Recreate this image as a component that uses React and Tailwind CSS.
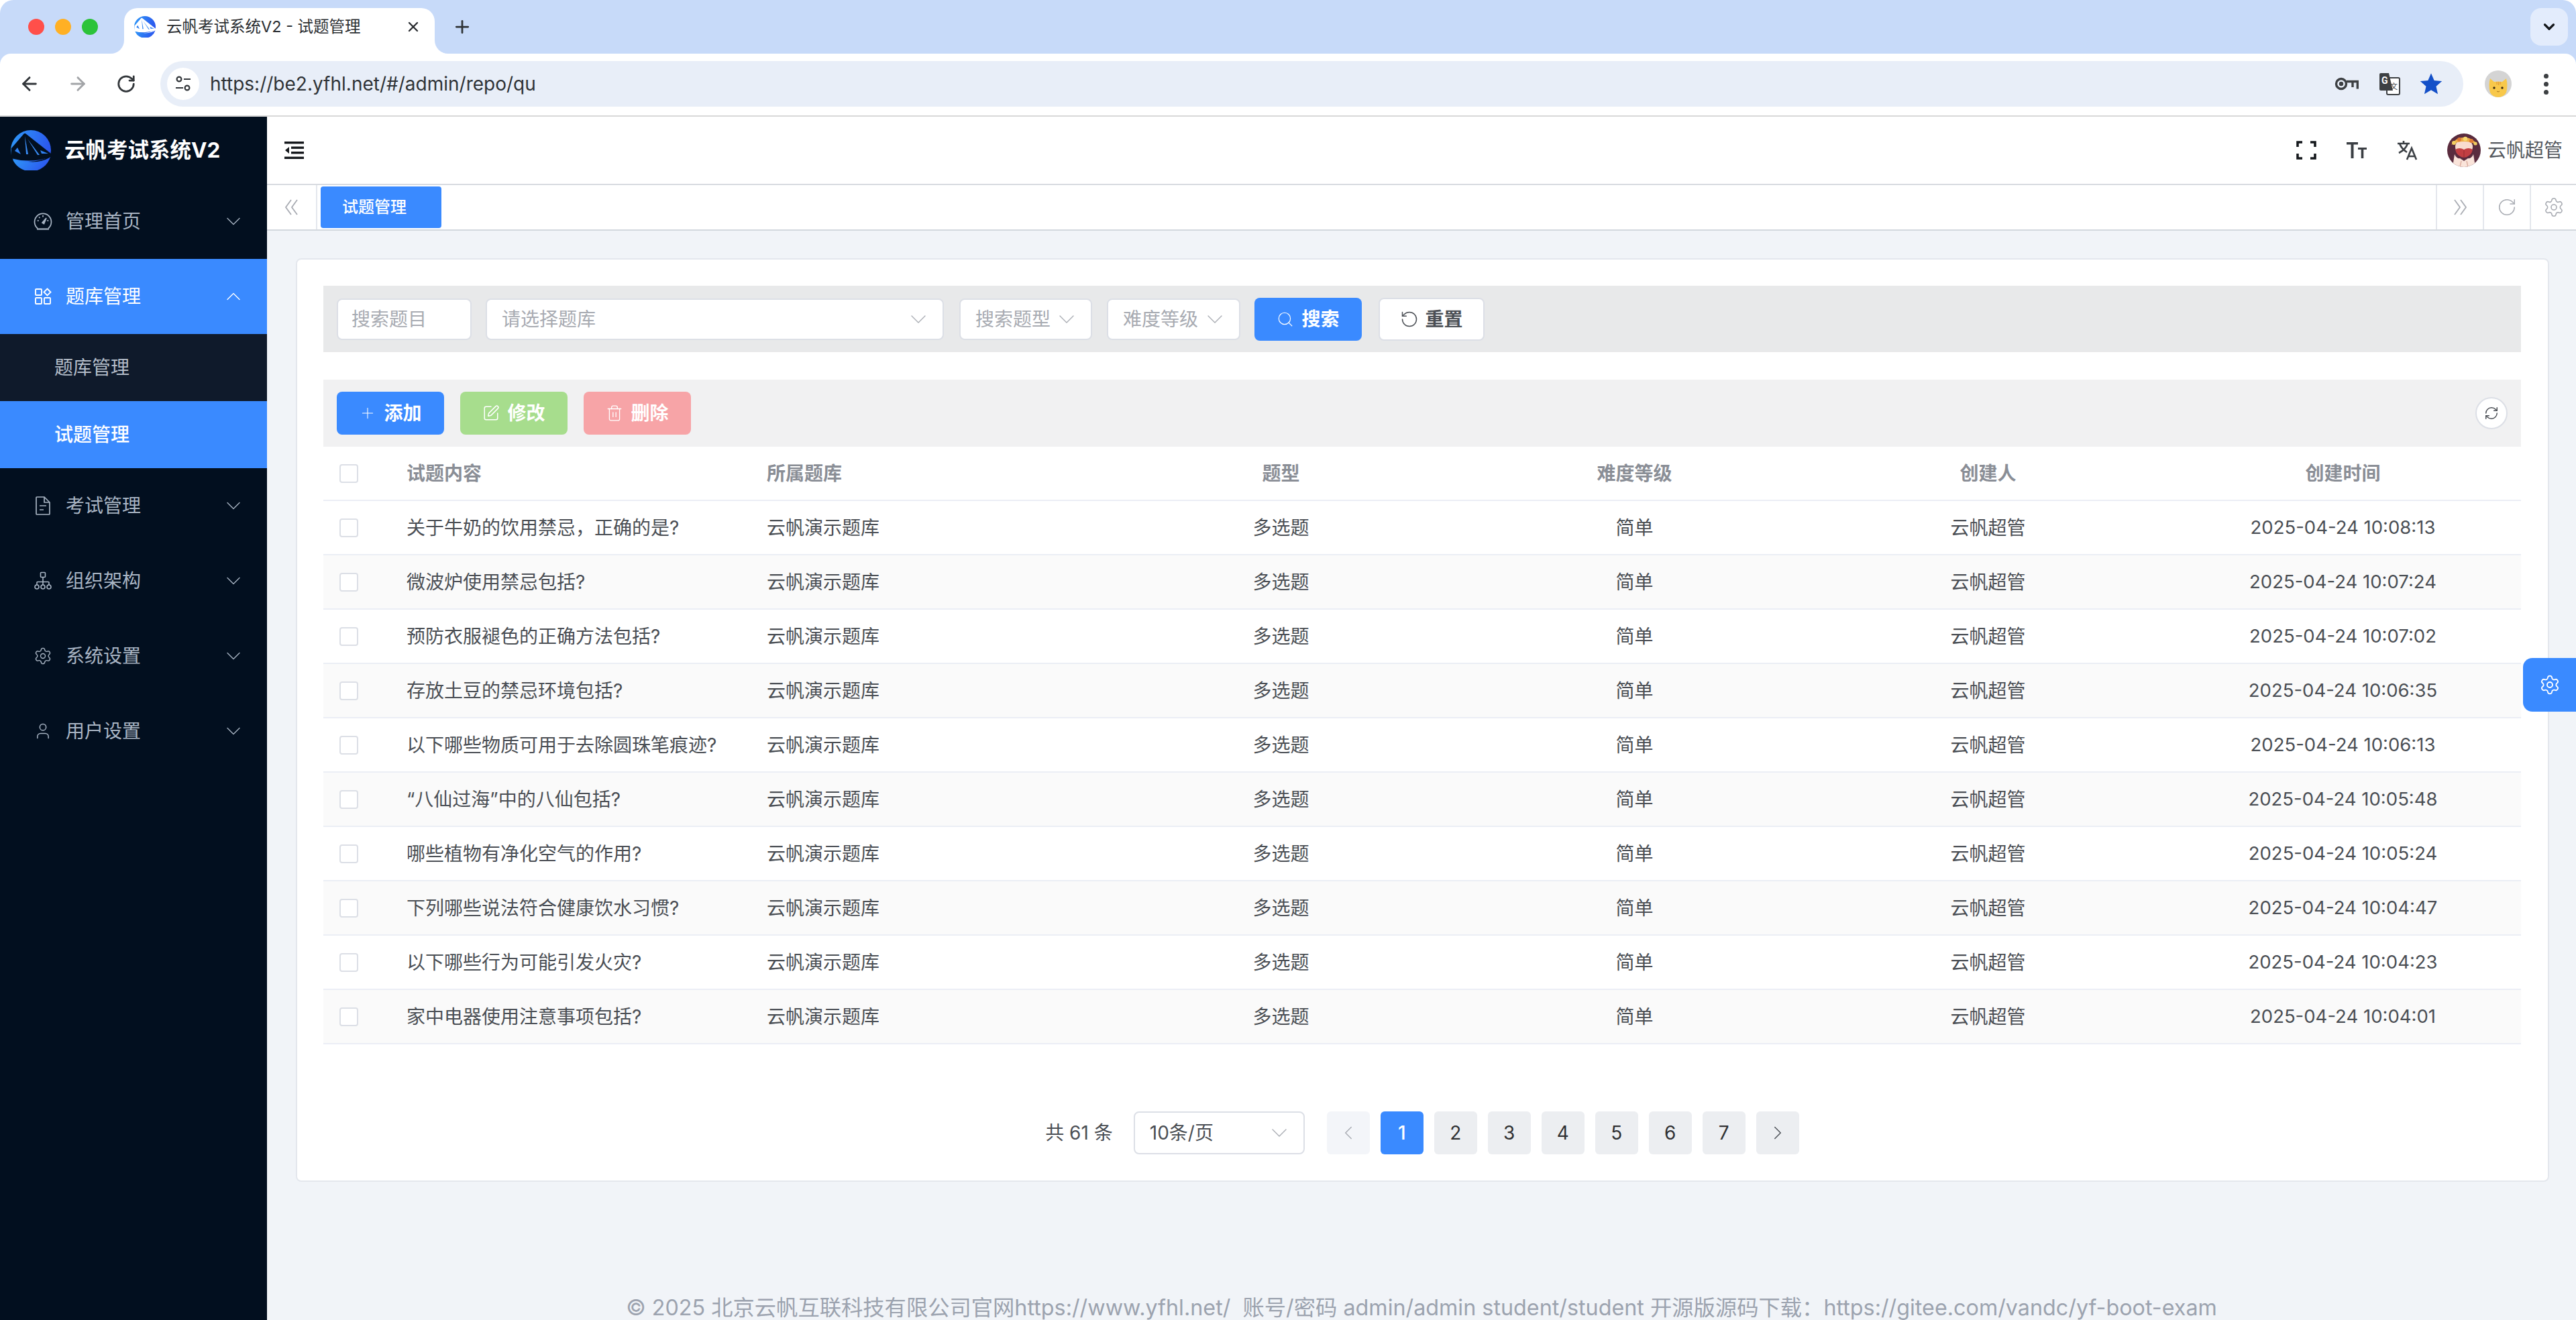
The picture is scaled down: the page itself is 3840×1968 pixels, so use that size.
import {
  ArrowLeft, ArrowRight, RotateCw, Plus, X, ChevronDown, ChevronUp, ChevronLeft, ChevronRight,
  Settings, User, SquarePen, Trash2, Search, RotateCcw, RefreshCw,
} from 'lucide-react';

const rows = [
  ['关于牛奶的饮用禁忌，正确的是?', '2025-04-24 10:08:13'],
  ['微波炉使用禁忌包括?', '2025-04-24 10:07:24'],
  ['预防衣服褪色的正确方法包括?', '2025-04-24 10:07:02'],
  ['存放土豆的禁忌环境包括?', '2025-04-24 10:06:35'],
  ['以下哪些物质可用于去除圆珠笔痕迹?', '2025-04-24 10:06:13'],
  ['“八仙过海”中的八仙包括?', '2025-04-24 10:05:48'],
  ['哪些植物有净化空气的作用?', '2025-04-24 10:05:24'],
  ['下列哪些说法符合健康饮水习惯?', '2025-04-24 10:04:47'],
  ['以下哪些行为可能引发火灾?', '2025-04-24 10:04:23'],
  ['家中电器使用注意事项包括?', '2025-04-24 10:04:01'],
];

const LogoMark = ({ className, cut = '#020f1f' }) => (
  <svg viewBox="0 0 60 60" className={className}>
    <defs>
      <linearGradient id="logoGrad" x1="0" y1="0" x2="1" y2="0.3">
        <stop offset="0" stopColor="#2f9bf8" />
        <stop offset="1" stopColor="#2b57ee" />
      </linearGradient>
    </defs>
    <circle cx="30" cy="30" r="30" fill="url(#logoGrad)" />
    <path d="M20 5 L1 27 L0 42 Q30 50 60 40 L60 35 L22 5Z" fill={cut} />
    <path d="M21 9 L23 36 L26 36 Z" fill="#3a8df5" />
    <path d="M25 13 L40 37 L43 37 Z" fill="#3a8df5" />
    <path d="M10 26 L15 36 L6 31 Z M44 30 L56 35 L46 35 Z" fill="#2f80f2" />
    <path d="M3 44 Q30 52 59 40 A30 30 0 0 1 3 44Z" fill="url(#logoGrad)" />
    <path d="M26 47 Q44 47 58 39 L58 41 Q44 49 26 47Z" fill={cut} />
  </svg>
);

const CatAvatar = () => (
  <svg viewBox="0 0 40 40" className="w-10 h-10">
    <circle cx="20" cy="20" r="20" fill="#d4d4d4" />
    <path d="M8 33 Q5 22 8 12 L14 17 Q20 16 26 17 L32 12 Q35 22 32 33 Q28 40 20 40 Q12 40 8 33Z" fill="#f8c84a" />
    <path d="M18 17v4M20.500 17v5M23 17v4" stroke="#e39a3a" strokeWidth="1.200" />
    <circle cx="14" cy="26" r="1.700" fill="#3a2a10" />
    <circle cx="26" cy="26" r="1.700" fill="#3a2a10" />
    <path d="M18 31 Q20 33 22 31" stroke="#a8741c" strokeWidth="1" fill="none" />
  </svg>
);

const UserAvatar = () => (
  <svg viewBox="0 0 50 50" className="w-[50px] h-[50px] shrink-0">
    <clipPath id="avatarClip"><circle cx="25" cy="25" r="25" /></clipPath>
    <g clipPath="url(#avatarClip)">
      <rect width="50" height="50" fill="#5a2c3e" />
      <ellipse cx="25" cy="20" rx="13" ry="12" fill="#f8dcd0" />
      <path d="M6 17 Q14 5 25 6 Q37 5 45 17 Q35 12 25 12 Q15 12 6 17Z" fill="#eeb04a" />
      <circle cx="10" cy="14" r="3" fill="#f3cf62" />
      <circle cx="18" cy="9" r="3" fill="#e07a36" />
      <circle cx="27" cy="8" r="3.200" fill="#f6d86e" />
      <circle cx="36" cy="11" r="3" fill="#e07a36" />
      <circle cx="42" cy="15" r="2.600" fill="#f3cf62" />
      <path d="M12 24 Q18 20 25 24 Q32 20 38 24 Q36 34 25 36 Q14 34 12 24Z" fill="#c23e42" />
      <path d="M25 25v11" stroke="#962a2e" strokeWidth="1" />
      <path d="M8 50 L11 31 Q14 38 19 37 L25 41 L31 37 Q36 38 39 31 L42 50Z" fill="#fae4da" />
      <path d="M19 50 L21 41 M31 50 L29 41" stroke="#dcae9f" strokeWidth="1.500" />
    </g>
  </svg>
);

const GaugeIcon = () => (
  <svg viewBox="0 0 28 28" className="w-[28px] h-[28px]" fill="none" stroke="currentColor" strokeWidth="1.700">
    <path d="M6 24.500 A12.500 12.500 0 1 1 22 24.500" />
    <path d="M5 25.500h18" strokeWidth="2.200" />
    <path d="M14 5v2.500M5.500 13H8M20 13h2.500M8 7.500l1.500 1.500" />
    <path d="M13 16 L19 9 L15.500 17.500 Z" fill="currentColor" />
  </svg>
);

const DocIcon = () => (
  <svg viewBox="0 0 26 30" className="w-[26px] h-[30px]" fill="none" stroke="currentColor" strokeWidth="1.700">
    <path d="M3 3a1 1 0 0 1 1-1h11l8 8v17a1 1 0 0 1-1 1H4a1 1 0 0 1-1-1z" />
    <path d="M15 2v8h8M8 15h10M8 21h6" />
  </svg>
);

const OrgIcon = () => (
  <svg viewBox="0 0 28 28" className="w-7 h-7" fill="none" stroke="currentColor" strokeWidth="1.600">
    <rect x="10.500" y="1.500" width="7" height="7" rx="1" />
    <path d="M14 8.500V14M5 20v-3.500a1 1 0 0 1 1-1h16a1 1 0 0 1 1 1V20M14 14v6" />
    <circle cx="5" cy="23" r="3" />
    <circle cx="14" cy="23" r="3" />
    <circle cx="23" cy="23" r="3" />
  </svg>
);

const GridIcon = () => (
  <svg viewBox="0 0 26 26" className="w-[26px] h-[26px]" fill="none" stroke="currentColor" strokeWidth="1.900">
    <rect x="2" y="2" width="9" height="9" rx="1" />
    <rect x="2" y="15" width="9" height="9" rx="1" />
    <rect x="15" y="15" width="9" height="9" rx="1" />
    <path d="M19.500 1.500 L24.500 6.500 L19.500 11.500 L14.500 6.500Z" />
  </svg>
);

const MenuItem = ({ icon, label, open = false }) => (
  <div className={`h-[112px] flex items-center pl-[50px] pr-[32px] ${open ? 'bg-[#3a8aff] text-white' : 'text-[#a9b5c4]'}`}>
    <span className="w-[28px] flex justify-center">{icon}</span>
    <span className="ml-[20px] text-[28px] flex-1">{label}</span>
    {open ? <ChevronUp size={36} strokeWidth={0.900} /> : <ChevronDown size={36} strokeWidth={0.900} />}
  </div>
);

const SelectBox = ({ label, width, textClass = 'text-[#a8abb2]' }) => (
  <div className={`${width} bg-white border-2 border-[#dcdfe6] rounded-[8px] flex items-center justify-between pl-[22px] pr-[16px] text-[28px] ${textClass}`}>
    <span>{label}</span>
    <ChevronDown size={40} strokeWidth={0.800} className="text-[#a8abb2]" />
  </div>
);

const ActionButton = ({ icon, label, color }) => (
  <div className={`w-[160px] h-[64px] rounded-[8px] flex items-center justify-center gap-[11px] text-white text-[28px] font-bold ${color}`}>
    <span className="w-[26px] flex justify-center">{icon}</span>
    <span>{label}</span>
  </div>
);

const DoubleChevron = ({ d }) => (
  <svg viewBox="0 0 21 24" className="w-[21px] h-[24px]" fill="none" stroke="#a8abb2" strokeWidth="1.800">
    <path d={d} />
  </svg>
);

const gridCols = 'grid grid-cols-[101px_536px_527px_527px_527px_527px_531px] items-center';

export default function App() {
  return (
    <div className="w-[3840px] h-[1968px] flex flex-col overflow-hidden relative bg-white font-[Inter,'Noto_Sans_CJK_SC',sans-serif]">
      {/* browser tab strip */}
      <div className="h-[80px] shrink-0 bg-[#c7daf9] rounded-t-[20px] flex items-end pl-[42px] pr-[12px]">
        <div className="h-[80px] flex items-center gap-[16px]">
          <span className="w-6 h-6 rounded-full bg-[#ff4f4a]" />
          <span className="w-6 h-6 rounded-full bg-[#ffb024]" />
          <span className="w-6 h-6 rounded-full bg-[#2cc33a]" />
        </div>
        <div className="ml-[39px] w-[463px] h-[68px] bg-white rounded-t-[20px] flex items-center pl-[15px] pr-[20px] pb-[12px] relative">
          <span className="absolute -left-[20px] bottom-0 w-5 h-5 bg-white"><span className="block w-full h-full bg-[#c7daf9] rounded-br-[20px]" /></span>
          <span className="absolute -right-[20px] bottom-0 w-5 h-5 bg-white"><span className="block w-full h-full bg-[#c7daf9] rounded-bl-[20px]" /></span>
          <LogoMark className="w-[32px] h-[32px]" cut="#ffffff" />
          <span className="ml-[16px] text-[23.5px] text-[#2c2f33] flex-1 whitespace-nowrap">云帆考试系统V2 - 试题管理</span>
          <X size={24} strokeWidth={2.400} className="text-[#2c2f33]" />
        </div>
        <div className="h-[80px] ml-[26px] flex items-center">
          <Plus size={30} strokeWidth={2.200} className="text-[#2f3337]" />
        </div>
        <div className="ml-auto mb-[12px] w-[56px] h-[56px] rounded-[16px] bg-[#e3ecfc] flex items-center justify-center">
          <ChevronDown size={26} strokeWidth={3} className="text-[#15181c]" />
        </div>
      </div>

      {/* browser toolbar */}
      <div className="shrink-0 bg-[#c7daf9]">
        <div className="h-[94px] bg-white rounded-t-[16px] border-b-2 border-[#d8d8d8] flex items-center pl-[28px] pr-[40px] pb-[2px]">
          <ArrowLeft size={32} strokeWidth={2.200} className="text-[#33373b]" />
          <ArrowRight size={32} strokeWidth={2.200} className="ml-[40px] text-[#a3a5a8]" />
          <RotateCw size={30} strokeWidth={2.200} className="ml-[41px] text-[#33373b]" />
          <div className="ml-[36px] flex-1 h-[68px] bg-[#e8eef8] rounded-full flex items-center pl-[10px] pr-[30px]">
            <div className="w-[48px] h-[48px] rounded-full bg-white flex items-center justify-center">
              <svg viewBox="0 0 28 28" className="w-[28px] h-[28px]" fill="none" stroke="#33373b" strokeWidth="2.200">
                <circle cx="8" cy="7" r="3.400" />
                <path d="M15 7h10M3 20h11" />
                <circle cx="20" cy="20" r="3.400" />
              </svg>
            </div>
            <span className="ml-[16px] text-[28px] text-[#2f3337] flex-1">https://be2.yfhl.net/#/admin/repo/qu</span>
            <svg viewBox="0 0 36 20" className="w-[36px] h-[20px]" fill="none" stroke="#3d4043" strokeWidth="3.400">
              <circle cx="10" cy="10" r="7.500" />
              <path d="M18 6.500h16.300v11M27 7v8" />
              <circle cx="10" cy="10" r="1.500" fill="#3d4043" />
            </svg>
            <svg viewBox="0 0 32 34" className="ml-[30px] w-[32px] h-[34px]">
              <rect x="12" y="8" width="19" height="25" rx="2" fill="#fff" stroke="#3d4043" strokeWidth="2" />
              <path d="M3 1h12l6 26H3a2 2 0 0 1-2-2V3a2 2 0 0 1 2-2z" fill="#3d4043" />
              <text x="4" y="17" fontSize="14" fontWeight="700" fill="#fff" fontFamily="Roboto, sans-serif">G</text>
              <text x="17" y="25" fontSize="11" fill="#3d4043" fontFamily="'Noto Sans CJK SC', sans-serif">文</text>
            </svg>
            <svg viewBox="0 0 24 24" className="ml-[28px] w-[36px] h-[36px]" fill="#1450c8">
              <path d="M12 1.500l3.100 7.200 7.700.7-5.800 5.100 1.700 7.600L12 18.100l-6.700 4 1.700-7.600L1.200 9.400l7.700-.7z" />
            </svg>
          </div>
          <div className="ml-[32px]"><CatAvatar /></div>
          <div className="ml-[48px] w-[8px] flex flex-col gap-[5px]">
            <span className="w-[7px] h-[7px] rounded-full bg-[#3d4043]" />
            <span className="w-[7px] h-[7px] rounded-full bg-[#3d4043]" />
            <span className="w-[7px] h-[7px] rounded-full bg-[#3d4043]" />
          </div>
        </div>
      </div>

      <div className="flex-1 flex min-h-0">
        {/* sidebar */}
        <aside className="w-[398px] shrink-0 bg-[#020f1f] flex flex-col">
          <div className="h-[100px] flex items-center pl-[16px]">
            <LogoMark className="w-[60px] h-[60px]" />
            <span className="ml-[20px] text-[31.5px] font-bold text-white whitespace-nowrap">云帆考试系统V2</span>
          </div>
          <MenuItem icon={<GaugeIcon />} label="管理首页" />
          <MenuItem icon={<GridIcon />} label="题库管理" open />
          <div className="h-[100px] bg-[#0f1a2b] flex items-center pl-[81px] text-[28px] text-[#b4bdc9]">题库管理</div>
          <div className="h-[100px] bg-[#3a8aff] flex items-center pl-[81px] text-[28px] font-medium text-white">试题管理</div>
          <MenuItem icon={<DocIcon />} label="考试管理" />
          <MenuItem icon={<OrgIcon />} label="组织架构" />
          <MenuItem icon={<Settings size={34} strokeWidth={1.200} />} label="系统设置" />
          <MenuItem icon={<User size={34} strokeWidth={1.300} />} label="用户设置" />
        </aside>

        <main className="flex-1 min-w-0 bg-[#f1f4f8] flex flex-col">
          {/* top header */}
          <div className="h-[102px] shrink-0 bg-white border-b-2 border-[#d8dbe0] flex items-center pl-[26px] pr-[20px] text-[#202327]">
            <svg viewBox="0 0 30 26" className="w-[30px] h-[26px]" fill="#15181c">
              <rect x="0" y="0" width="29" height="3.400" />
              <rect x="10" y="7.500" width="19" height="3.400" />
              <rect x="10" y="15" width="19" height="3.400" />
              <rect x="0" y="22.600" width="29" height="3.400" />
              <path d="M7 8v10l-6-5z" />
            </svg>
            <svg viewBox="0 0 30 28" className="ml-auto w-[30px] h-[28px]" fill="none" stroke="#15181c" strokeWidth="3.600">
              <path d="M2 9V2h7M21 2h7v7M28 19v7h-7M9 26H2v-7" />
            </svg>
            <svg viewBox="0 0 30 24" className="ml-[45px] w-[30px] h-[24px]" fill="#3b3f44">
              <path d="M0 0h17v3.600h-6.500V24H6.500V3.600H0zM17 8h13v3h-4.700V24H21.700V11H17z" />
            </svg>
            <svg viewBox="0 0 32 30" className="ml-[45px] w-[32px] h-[30px]" fill="none" stroke="#3b3f44" strokeWidth="2.600">
              <path d="M1 5h18M10 1v4M4 5q3 8 11 13M16 5q-3 9-13 14M15 29l7-17 7 17M18 24h8" />
            </svg>
            <span className="ml-[43px]"><UserAvatar /></span>
            <span className="ml-[10px] text-[28px] text-[#55595f]">云帆超管</span>
          </div>

          {/* tabs row */}
          <div className="h-[68px] shrink-0 bg-white border-b-2 border-[#d3d8de] flex items-center">
            <div className="w-[75px] h-full border-r-2 border-[#e4e7ed] flex items-center justify-center">
              <DoubleChevron d="M10 1 L2 12 L10 23 M19 1 L11 12 L19 23" />
            </div>
            <div className="ml-[5px] w-[180px] h-[62px] bg-[#3a8aff] rounded-[4px] flex items-center pl-[32px] text-[24px] font-medium text-white">试题管理</div>
            <div className="ml-auto w-[70px] h-full border-l-2 border-[#e4e7ed] flex items-center justify-center">
              <DoubleChevron d="M2 1 L10 12 L2 23 M11 1 L19 12 L11 23" />
            </div>
            <div className="w-[70px] h-full border-l-2 border-[#e4e7ed] flex items-center justify-center text-[#a8abb2]">
              <RotateCw size={30} strokeWidth={1.200} />
            </div>
            <div className="w-[69px] h-full border-l-2 border-[#e4e7ed] flex items-center justify-center text-[#a8abb2]">
              <Settings size={32} strokeWidth={1.200} />
            </div>
          </div>

          {/* content card */}
          <div className="ml-[43px] mr-[40px] mt-[41px] h-[1377px] shrink-0 bg-white border-2 border-[#e4e7ed] rounded-[8px] pt-[39px] pl-[39px] pr-[40px]">
            <div className="h-[99px] bg-[#e8e9ea] flex items-center pl-[20px]">
              <div className="w-[201px] h-[62px] bg-white border-2 border-[#dcdfe6] rounded-[8px] flex items-center pl-[20px] text-[28px] text-[#a8abb2]">搜索题目</div>
              <div className="ml-[21px]"><SelectBox label="请选择题库" width="w-[683px] h-[62px]" /></div>
              <div className="ml-[23px]"><SelectBox label="搜索题型" width="w-[198px] h-[62px]" /></div>
              <div className="ml-[22px]"><SelectBox label="难度等级" width="w-[199px] h-[62px]" /></div>
              <div className="ml-[21px]"><ActionButton icon={<Search size={32} strokeWidth={1.100} />} label="搜索" color="bg-[#3a8aff]" /></div>
              <div className="ml-[25px] w-[158px] h-[64px] bg-white border-2 border-[#dcdfe6] rounded-[8px] flex items-center justify-center gap-[9px] text-[28px] font-bold text-[#4b4f55]">
                <RotateCcw size={28} strokeWidth={1.300} />
                <span>重置</span>
              </div>
            </div>

            <div className="mt-[41px] h-[100px] bg-[#f1f1f2] flex items-center pl-[20px] pr-[20px]">
              <ActionButton icon={<Plus size={38} strokeWidth={1} />} label="添加" color="bg-[#3a8aff]" />
              <div className="ml-[24px]"><ActionButton icon={<SquarePen size={28} strokeWidth={1.400} />} label="修改" color="bg-[#a7dd8d]" /></div>
              <div className="ml-[24px]"><ActionButton icon={<Trash2 size={32} strokeWidth={1.200} />} label="删除" color="bg-[#f7a4a7]" /></div>
              <div className="ml-auto w-[48px] h-[48px] rounded-full bg-white border-2 border-[#dcdfe6] flex items-center justify-center text-[#4b4f55]">
                <RefreshCw size={22} strokeWidth={1.600} />
              </div>
            </div>

            {/* table */}
            <div className={`${gridCols} h-[81px] border-b-2 border-[#ebeef5] text-[28px] font-bold text-[#8a8e96]`}>
              <span className="ml-[24px] w-7 h-7 border-2 border-[#dcdfe6] rounded-[4px] bg-white" />
              <span className="pl-[23px]">试题内容</span>
              <span className="pl-[24px]">所属题库</span>
              <span className="text-center">题型</span>
              <span className="text-center">难度等级</span>
              <span className="text-center">创建人</span>
              <span className="text-center">创建时间</span>
            </div>
            {rows.map(([title, date], i) => (
              <div key={date} className={`${gridCols} h-[81px] border-b-2 border-[#ebeef5] text-[28px] text-[#4b4f55] ${i % 2 ? 'bg-[#fafafa]' : 'bg-white'}`}>
                <span className="ml-[24px] w-7 h-7 border-2 border-[#dcdfe6] rounded-[4px] bg-white" />
                <span className="pl-[23px]">{title}</span>
                <span className="pl-[24px]">云帆演示题库</span>
                <span className="text-center">多选题</span>
                <span className="text-center">简单</span>
                <span className="text-center">云帆超管</span>
                <span className="text-center text-[27.5px]">{date}</span>
              </div>
            ))}

            {/* pagination */}
            <div className="mt-[100px] flex items-center justify-center text-[28px] text-[#4b4f55]">
              <span>共 61 条</span>
              <div className="ml-[31px]"><SelectBox label="10条/页" width="w-[255px] h-[64px]" textClass="text-[#4b4f55]" /></div>
              <div className="ml-[33px] w-[64px] h-[64px] rounded-[6px] bg-[#f3f5f9] flex items-center justify-center text-[#a8abb2]">
                <ChevronLeft size={34} strokeWidth={1} />
              </div>
              {[1, 2, 3, 4, 5, 6, 7].map((n) => (
                <div key={n} className={`ml-[16px] w-[64px] h-[64px] rounded-[6px] flex items-center justify-center ${n === 1 ? 'bg-[#3a8aff] text-white font-medium' : 'bg-[#eceef1] text-[#303133]'}`}>{n}</div>
              ))}
              <div className="ml-[16px] w-[64px] h-[64px] rounded-[6px] bg-[#eceef1] flex items-center justify-center text-[#4b4f55]">
                <ChevronRight size={34} strokeWidth={1} />
              </div>
            </div>
          </div>

          {/* footer */}
          <div className="mt-[168px] h-[40px] shrink-0 leading-[40px] text-center text-[32.3px] text-[#9ca3af] whitespace-pre">
            {'© 2025 北京云帆互联科技有限公司官网https://www.yfhl.net/  账号/密码 admin/admin student/student 开源版源码下载：https://gitee.com/vandc/yf-boot-exam'}
          </div>
        </main>
      </div>

      {/* floating settings tab */}
      <div className="absolute left-[3761px] top-[981px] w-[79px] h-[80px] bg-[#3a8aff] rounded-l-[14px] flex items-center justify-center text-white">
        <Settings size={32} strokeWidth={1.400} />
      </div>
    </div>
  );
}
